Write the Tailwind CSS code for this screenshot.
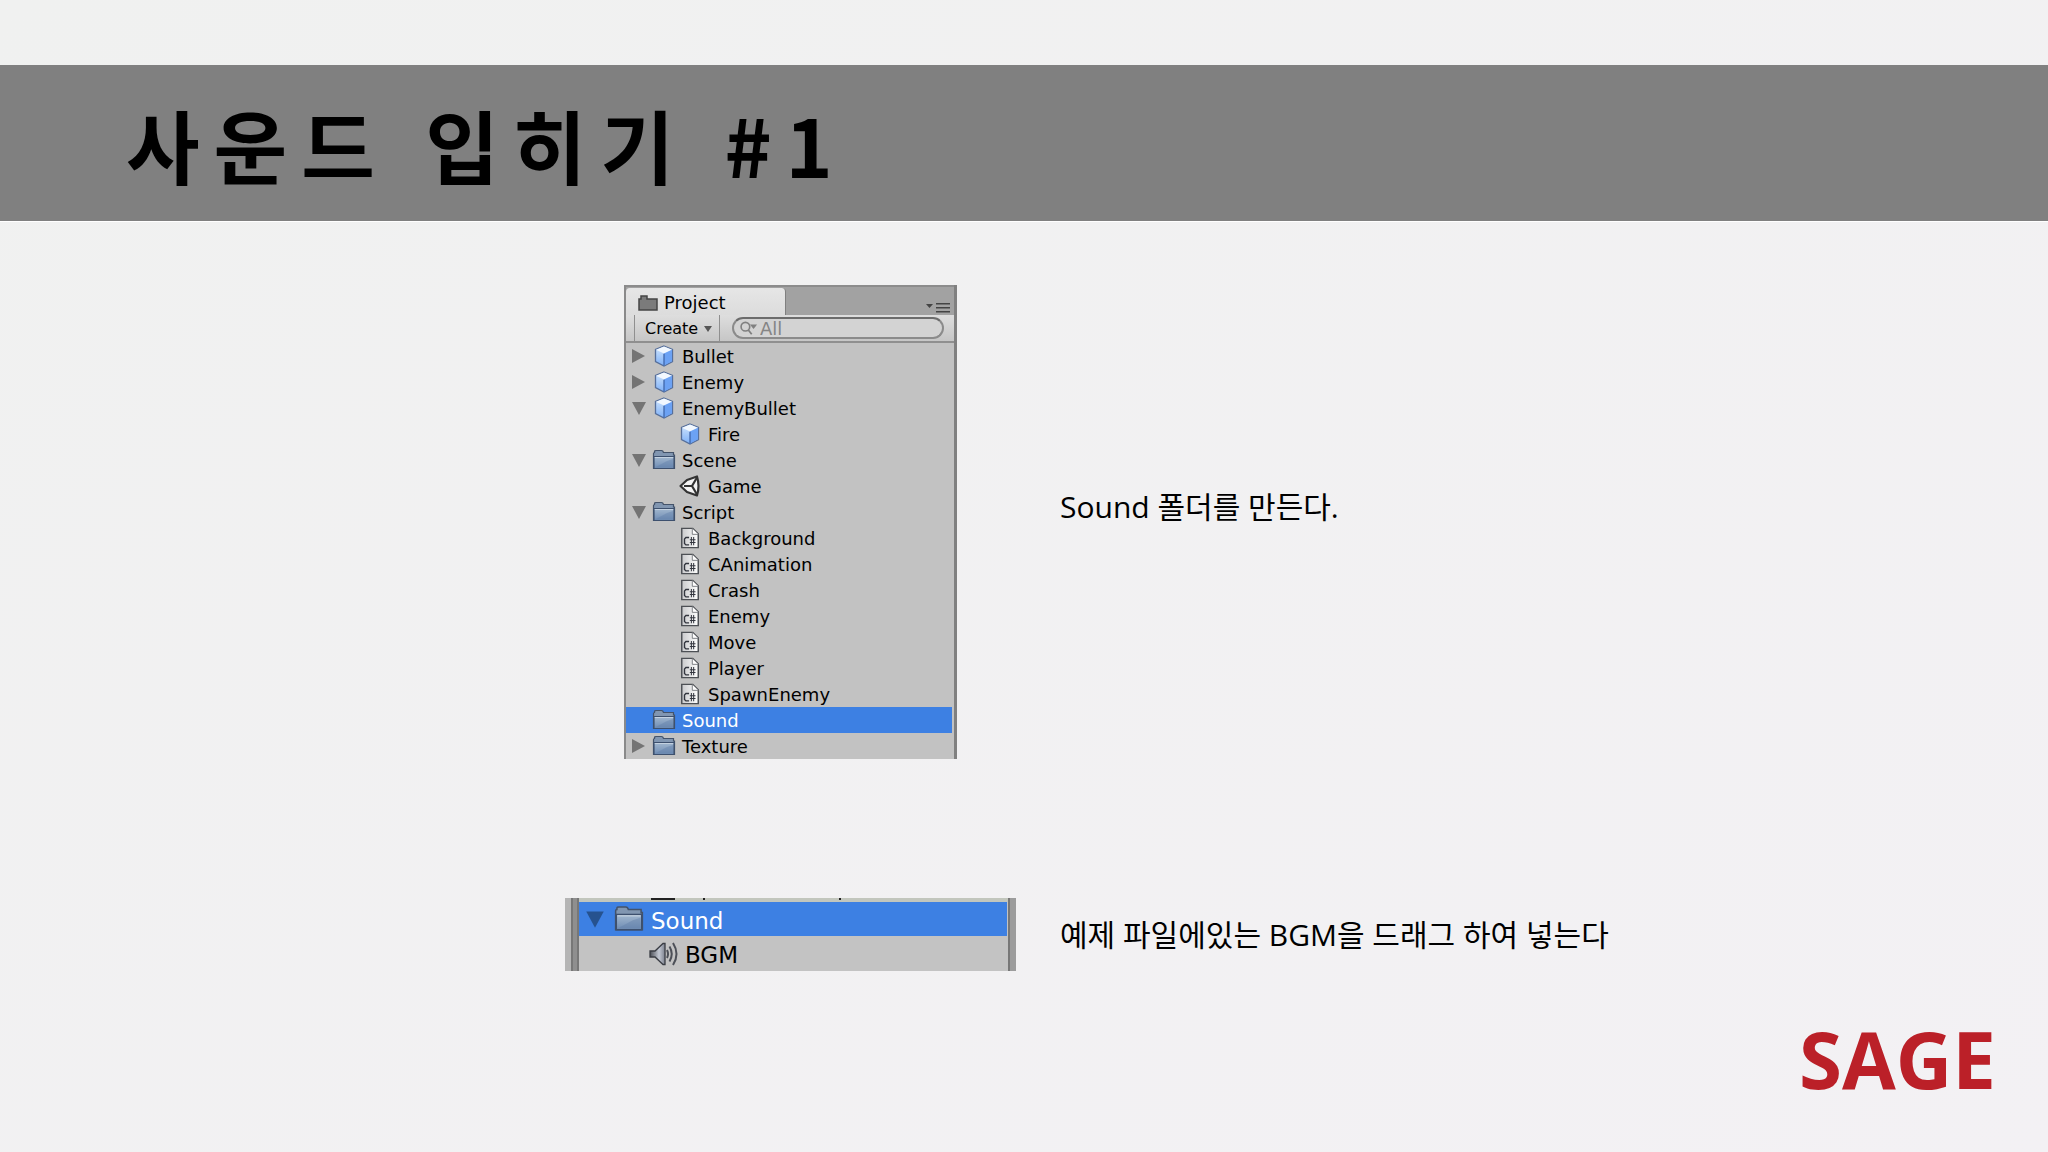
<!DOCTYPE html>
<html lang="ko">
<head>
  <meta charset="UTF-8">
  <meta name="viewport" content="width=device-width, initial-scale=1.0">
  <title>사운드 입히기 #1</title>
  <script src="https://cdn.jsdelivr.net/npm/@tailwindcss/browser@4"></script>
</head>
<body class="min-h-screen flex flex-col bg-linear-to-br from-[#f0f1f0] to-[#f3f1f4] text-black overflow-x-hidden">

  <!-- icons -->
  <svg class="absolute w-0 h-0">
    <defs>
      <linearGradient id="folderFill" x1="0" y1="0" x2="0" y2="1">
        <stop offset="0" stop-color="#a3b8cf"/><stop offset="1" stop-color="#6d8bb3"/>
      </linearGradient>
      <linearGradient id="cubeFill" x1="0" y1="0" x2="0" y2="1">
        <stop offset="0" stop-color="#d3e7fd"/><stop offset="1" stop-color="#7db0f8"/>
      </linearGradient>
      <linearGradient id="pageFill" x1="0" y1="0" x2="1" y2="0">
        <stop offset="0" stop-color="#c9cacc"/><stop offset="1" stop-color="#ffffff"/>
      </linearGradient>
      <linearGradient id="coneFill" x1="0" y1="0" x2="1" y2="0">
        <stop offset="0" stop-color="#4b4e56"/><stop offset="0.6" stop-color="#c3c8d3"/><stop offset="1" stop-color="#7d828e"/>
      </linearGradient>
    </defs>
    <symbol id="folder" viewBox="0 0 24 22">
      <path d="M1.5 19V4.500Q1.500 3.500 2.500 3.500V2.500Q2.500 1.500 4 1.500H9.500Q11 1.500 11.500 3.500H21.500V6H22.500V19.500H1.500Z" fill="#8196b1" stroke="#44536a" stroke-width="1.200"/>
      <path d="M2 7.500H22V19.500H2Z" fill="url(#folderFill)" stroke="#3d506e" stroke-width="1.200"/>
      <path d="M2.800 8.500H21.200" stroke="#c3d1e0" stroke-width="1"/>
      <path d="M3 18.500L15 12L21 10V18.500Z" fill="#5f7ea8" opacity=".4"/>
    </symbol>
    <symbol id="cube" viewBox="0 0 20 22">
      <path d="M10 1L18.500 4.500V16.500L10 21L1.500 16.500V4.500Z" fill="url(#cubeFill)" stroke="#566f9b" stroke-width="1.300"/>
      <path d="M10 1.500L18 4.800L10 8.500L2 4.800Z" fill="#f2f8ff"/>
      <path d="M10 8.500L18 4.800V16.200L10 20.400Z" fill="#6ca2f4"/>
      <path d="M10 8.800V20.500" fill="none" stroke="#3f66ab" stroke-width="1.300"/>
    </symbol>
    <symbol id="script" viewBox="0 0 20 24">
      <path d="M1 1.500H13L19 7.500V22.500H1Z" fill="url(#pageFill)" stroke="#4d5055" stroke-width="1.600"/>
      <path d="M12.500 1.500V8H19" fill="#fff" stroke="#74777c" stroke-width="1"/>
      <path d="M9 11.500H5.500L4 13V18L5.500 19.500H9" fill="none" stroke="#33363f" stroke-width="1.500"/>
      <path d="M11.500 11V20M14 11V20M9.800 14H16M9.800 17H16" fill="none" stroke="#33363f" stroke-width="1.100"/>
    </symbol>
    <symbol id="scene" viewBox="0 0 22 22">
      <path d="M1.500 11L8 5L18 1.500Q21 11 18 20.500L8 17Z" fill="#f4f4f4" stroke="#333" stroke-width="2.200" stroke-linejoin="round"/>
      <path d="M5 11H13M13 11L18 2.500M13 11L18 19.500" stroke="#333" stroke-width="2.200" fill="none"/>
    </symbol>
    <symbol id="speaker" viewBox="0 0 30 26">
      <path d="M1 10H6L14 2.500H16V23.500H14L6 16H1Z" fill="url(#coneFill)" stroke="#3a3d44" stroke-width="1.300"/>
      <path d="M18 9Q20 13 18 17M20.500 5.500Q25 13 20.500 20.500M24 2Q31 13 24 24" stroke="#4d5058" stroke-width="2" fill="none"/>
    </symbol>
    <symbol id="arrowRight" viewBox="0 0 14 16"><path d="M0 1L13 8L0 15Z" fill="#747474"/></symbol>
    <symbol id="arrowDown" viewBox="0 0 14 16"><path d="M0 2H14L7 15Z" fill="currentColor"/></symbol>
  </svg>

  <header class="mt-[65px] h-[157px] flex items-center bg-[#808080] border-b border-white pl-[126px]">
    <h1 class="font-['Noto_Sans_CJK_KR',sans-serif] font-bold text-[80px] leading-none tracking-[14px] whitespace-nowrap">사운드 입히기 #1</h1>
  </header>

  <main class="flex-1 pt-[63px] pl-[565px] grid grid-cols-[451px_1fr] gap-x-11 gap-y-[139px] content-start items-center font-['DejaVu_Sans',sans-serif]">

    <section class="justify-self-center w-[333px] bg-[#c2c2c2] border-l-2 border-l-[#8a8a8a] border-r-3 border-r-[#808080]">
      <div class="h-[30px] flex items-end justify-between bg-[#a2a2a2] border-t-2 border-[#8c8c8c]">
        <h2 class="w-40 h-[27px] flex items-center gap-1.5 pl-3 pt-0.5 rounded-t bg-linear-to-b from-[#e6e6e6] to-[#dcdcdc] border-r border-[#808080] text-[18px]">
          <svg class="w-5 h-4" viewBox="0 0 20 16"><path d="M1 15V4H3V1H9V4H19V15Z" fill="#7b7b7b" stroke="#454545" stroke-width="1.500"/></svg>
          Project
        </h2>
        <button class="mr-1 mb-0.5" aria-label="메뉴">
          <svg class="w-6 h-3" viewBox="0 0 24 12"><path d="M0 3H7L3.500 7ZM10 2H24V3.500H10ZM10 6H24V7.500H10ZM10 10H24V11.500H10Z" fill="#444"/></svg>
        </button>
      </div>
      <div class="h-7 flex items-center bg-linear-to-b from-[#dedede] to-[#c6c6c6] border-b-2 border-[#8f8f8f] pl-2 pr-2.5">
        <button class="h-full w-[86px] flex items-center gap-1.5 pl-2.5 pt-0.5 border-x border-[#8f8f8f] text-[16px]">
          Create
          <svg class="w-2 h-2" viewBox="0 0 8 8"><path d="M0 1H8L4 7Z" fill="#555"/></svg>
        </button>
        <label class="ml-3 flex-1 h-[22px] flex items-center gap-0.5 pl-1.5 rounded-full border-2 border-[#8b8b8b] border-t-[#6c6c6c] bg-[#d3d3d3]">
          <svg class="w-5 h-4" viewBox="0 0 20 16"><circle cx="6" cy="6.500" r="4.800" fill="none" stroke="#808080" stroke-width="1.800"/><path d="M9 10L13 15" stroke="#808080" stroke-width="2"/><path d="M11 4H19L15 9Z" fill="#808080"/></svg>
          <input type="text" aria-label="검색" placeholder="All" class="w-full text-[18px] leading-4 placeholder-[#858585] focus:outline-none">
        </label>
      </div>
      <ul id="tree" class="mr-0.5 text-[18px] leading-6"></ul>
    </section>
    <p class="pb-8 font-['Open_Sans','Noto_Sans_CJK_KR',sans-serif] text-[30px]">Sound 폴더를 만든다.</p>

    <section class="w-[451px] h-[73px] flex bg-[#c3c3c3] text-[23px] border-l-6 border-[#b5b5b5]">
      <div class="w-2 bg-[#8f8f8f] border-x-2 border-[#777]"></div>
      <div class="flex-1">
        <div class="h-1 flex gap-7 pl-[72px] bg-[#c2c6bd]"><span class="w-6 h-0.5 bg-[#222]"></span><span class="w-0.5 h-0.5 bg-[#222]"></span><span class="ml-[106px] w-0.5 h-0.5 bg-[#222]"></span></div>
        <div class="h-[34px] flex items-center pl-1.5 mr-px bg-[#3d80e3] text-white">
          <svg class="w-5 h-5 text-[#26528f]"><use href="#arrowDown"/></svg>
          <svg class="ml-2 mr-1.5 w-8 h-7"><use href="#folder"/></svg>
          <span class="pt-1">Sound</span>
        </div>
        <div class="h-[35px] flex items-center gap-1.5 pl-[70px]">
          <svg class="w-[30px] h-[26px]"><use href="#speaker"/></svg>
          <span class="pt-1">BGM</span>
        </div>
      </div>
      <div class="w-2 bg-[#9c9c9c] border-l-2 border-[#777]"></div>
    </section>
    <p class="font-['Open_Sans','Noto_Sans_CJK_KR',sans-serif] text-[30px]">예제 파일에있는 BGM을 드래그 하여 넣는다</p>
  </main>

  <footer class="flex justify-end pr-[52px] pb-12">
    <strong class="font-['Open_Sans',sans-serif] font-bold text-[78px] leading-[90px] text-[#bb2028]">SAGE</strong>
  </footer>

  <script>
    // [name, icon, arrow, depth]
    const items = [
      ['Bullet', 'cube', 'arrowRight', 0],
      ['Enemy', 'cube', 'arrowRight', 0],
      ['EnemyBullet', 'cube', 'arrowDown', 0],
      ['Fire', 'cube', '', 1],
      ['Scene', 'folder', 'arrowDown', 0],
      ['Game', 'scene', '', 1],
      ['Script', 'folder', 'arrowDown', 0],
      ['Background', 'script', '', 1],
      ['CAnimation', 'script', '', 1],
      ['Crash', 'script', '', 1],
      ['Enemy', 'script', '', 1],
      ['Move', 'script', '', 1],
      ['Player', 'script', '', 1],
      ['SpawnEnemy', 'script', '', 1],
      ['Sound', 'folder', '', 0],
      ['Texture', 'folder', 'arrowRight', 0]
    ];

    document.getElementById('tree').innerHTML = items.map(([name, icon, arrow, depth]) => `
      <li class="h-[26px] flex items-center gap-1.5 ${depth ? 'pl-8' : 'pl-1.5'} ${name === 'Sound' ? 'bg-[#3d80e3] text-white' : ''}">
        <svg class="w-3.5 h-4 shrink-0 ${arrow === 'arrowDown' ? 'text-[#747474]' : ''}">${arrow ? `<use href="#${arrow}"/>` : ''}</svg>
        <svg class="w-6 h-[22px] shrink-0"><use href="#${icon}"/></svg>
        <span class="pt-0.5">${name}</span>
      </li>`).join('');
  </script>
</body>
</html>
